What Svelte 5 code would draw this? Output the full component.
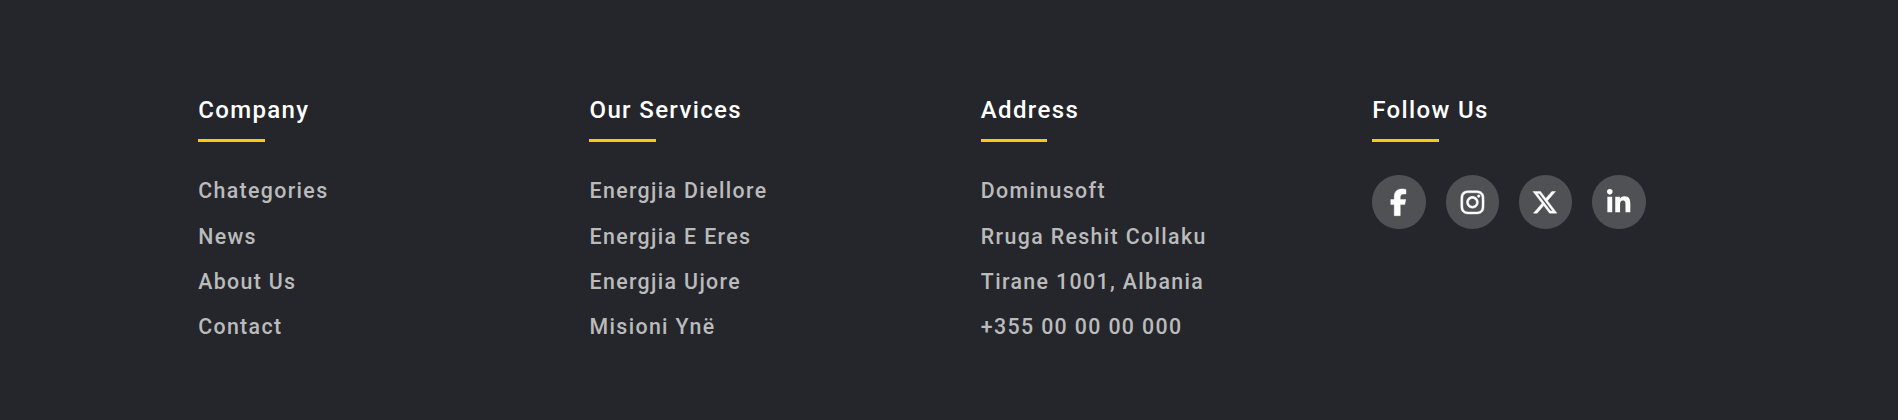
<script>
  const columns = [
    { title: 'Company', items: ['Chategories', 'News', 'About Us', 'Contact'] },
    { title: 'Our Services', items: ['Energjia Diellore', 'Energjia E Eres', 'Energjia Ujore', 'Misioni Ynë'] },
    { title: 'Address', items: ['Dominusoft', 'Rruga Reshit Collaku', 'Tirane 1001, Albania', '+355 00 00 00 000'] }
  ];

  const socials = [
    {
      name: 'Facebook',
      viewBox: '18 0 320 512',
      bold: true,
      path: 'M80 299.3V512H196V299.3h86.5l18-97.8H196V166.9c0-51.7 20.3-71.5 72.7-71.5c16.3 0 29.4 .4 37 1.200V7.900C291.400 4 256.400 0 236.200 0C129.300 0 80 50.500 80 159.400v42.100H14v97.800H80z'
    },
    {
      name: 'Instagram',
      viewBox: '4 0 448 512',
      bold: true,
      path: 'M224.100 141c-63.600 0-114.900 51.300-114.900 114.900s51.300 114.900 114.900 114.900S339 319.500 339 255.900 287.700 141 224.100 141zm0 189.600c-41.100 0-74.700-33.500-74.700-74.700s33.500-74.700 74.700-74.700 74.700 33.500 74.700 74.700-33.600 74.700-74.700 74.700zm146.400-194.300c0 14.900-12 26.800-26.800 26.800-14.900 0-26.800-12-26.800-26.800s12-26.800 26.800-26.800 26.800 12 26.800 26.800zm76.100 27.200c-1.700-35.900-9.900-67.700-36.200-93.900-26.200-26.200-58-34.400-93.900-36.200-37-2.100-147.900-2.100-184.900 0-35.800 1.700-67.600 9.900-93.900 36.100s-34.400 58-36.200 93.900c-2.100 37-2.100 147.900 0 184.900 1.700 35.900 9.900 67.700 36.200 93.900s58 34.400 93.900 36.200c37 2.100 147.900 2.100 184.900 0 35.900-1.700 67.700-9.900 93.900-36.200 26.200-26.200 34.400-58 36.200-93.900 2.100-37 2.100-147.800 0-184.800zM398.800 388c-7.800 19.600-22.900 34.700-42.600 42.600-29.500 11.700-99.500 9-132.100 9s-102.700 2.600-132.100-9c-19.600-7.800-34.700-22.900-42.600-42.600-11.700-29.500-9-99.500-9-132.100s-2.600-102.700 9-132.100c7.800-19.600 22.900-34.700 42.600-42.600 29.500-11.700 99.500-9 132.100-9s102.700-2.600 132.100 9c19.600 7.800 34.700 22.900 42.600 42.600 11.700 29.500 9 99.500 9 132.100s2.700 102.700-9 132.100z'
    },
    {
      name: 'X',
      viewBox: '8 0 512 512',
      bold: true,
      path: 'M389.200 48h70.600L305.600 224.200 487 464H345L233.700 318.600 106.500 464H35.800L200.700 275.500 26.800 48H172.400L272.900 180.900 389.200 48zM364.400 421.800h39.100L151.100 88h-42L364.400 421.800z'
    },
    {
      name: 'LinkedIn',
      viewBox: '0 0 448 512',
      path: 'M100.280 448H7.400V148.900h92.880zM53.790 108.100C24.090 108.100 0 83.500 0 53.800a53.790 53.790 0 0 1 107.580 0c0 29.700-24.100 54.300-53.790 54.300zM447.900 448h-92.680V302.400c0-34.700-.7-79.200-48.290-79.200-48.290 0-55.690 37.700-55.690 76.700V448h-92.780V148.900h89.080v40.800h1.300c12.400-23.500 42.690-48.300 87.880-48.300 94 0 111.280 61.900 111.280 142.300V448z'
    }
  ];
</script>

<footer>
  <div class="row">
    {#each columns as column}
      <section>
        <h4>{column.title}</h4>
        <ul>
          {#each column.items as item}
            <li>{item}</li>
          {/each}
        </ul>
      </section>
    {/each}
    <section>
      <h4>Follow Us</h4>
      <div class="socials">
        {#each socials as social}
          <span class="social" role="img" aria-label={social.name}>
            <svg class:bold={social.bold} viewBox={social.viewBox} height="26.667"><path d={social.path} /></svg>
          </span>
        {/each}
      </div>
    </section>
  </div>
</footer>

<style>
  :global(body) {
    background: #24262b;
  }

  footer {
    box-sizing: border-box;
    height: 420px;
    padding: 94.33px 0 0 198.15px;
    background: #24262b;
    font-family: Roboto, sans-serif;
    font-weight: 500;
    letter-spacing: 1.36px;
  }

  .row {
    display: grid;
    grid-template-columns: repeat(4, 391.35px);
  }

  h4 {
    display: grid;
    row-gap: 12.4px;
    margin: 0 0 33.6px;
    font-size: 24px;
    font-weight: 500;
    line-height: 32px;
    color: #fff;
  }

  h4::after {
    content: '';
    width: 66.67px;
    height: 3px;
    background: #ffc70f;
  }

  ul {
    margin: 0;
    padding: 0;
    list-style: none;
    display: grid;
    row-gap: 13.33px;
  }

  li {
    font-size: 21.333px;
    line-height: 32px;
    color: #bbb;
  }

  .socials {
    display: flex;
    gap: 20px;
  }

  .social {
    display: flex;
    align-items: center;
    justify-content: center;
    width: 53.4px;
    height: 53.4px;
    border-radius: 50%;
    background: #505155;
  }

  svg {
    display: block;
    overflow: visible;
    fill: #fff;
  }

  .bold {
    stroke: #fff;
    stroke-width: 8;
  }
</style>
